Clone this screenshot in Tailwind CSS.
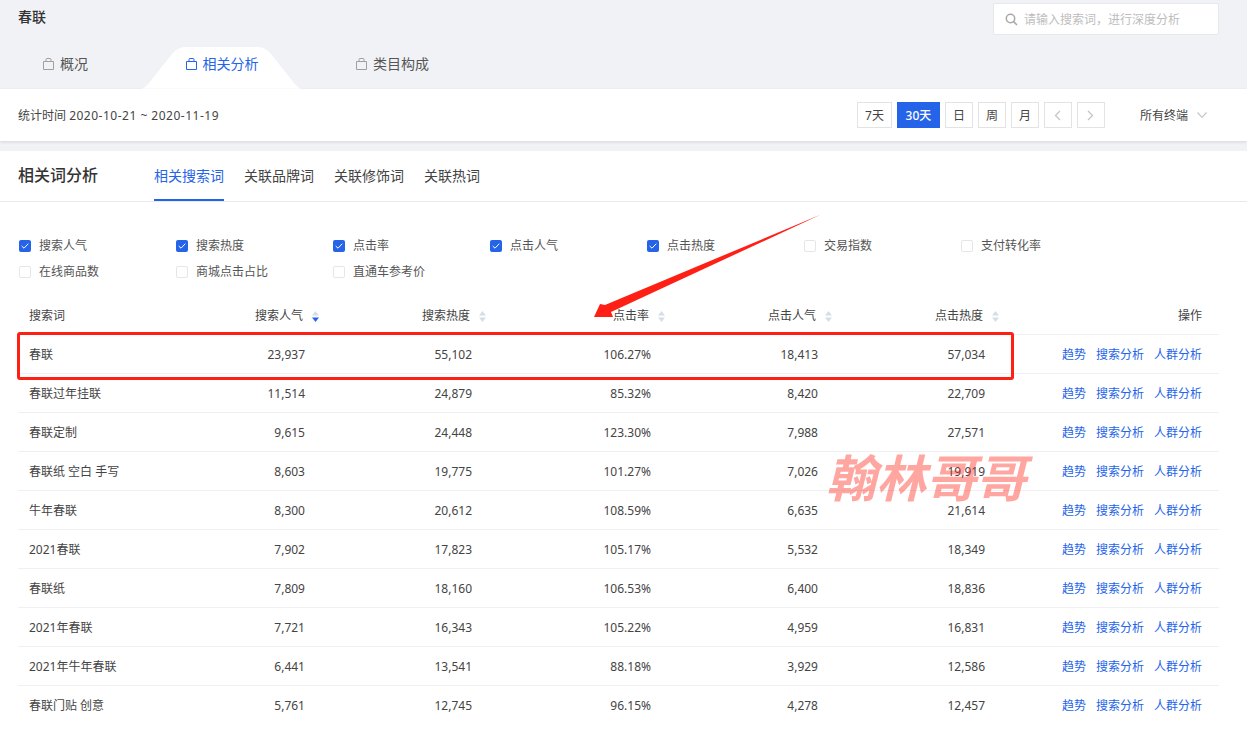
<!DOCTYPE html>
<html lang="zh-CN">
<head>
  <meta charset="UTF-8" />
  <title>春联 - 相关分析</title>
  <script src="https://cdn.jsdelivr.net/npm/@tailwindcss/browser@4"></script>
</head>
<body class="bg-white text-[12px] text-[#444] overflow-hidden font-['Noto_Sans','Noto_Sans_CJK_SC',sans-serif]">
<div class="relative w-[1247px] h-[735px] overflow-hidden">
  <!-- Top header -->
  <header class="bg-[#f1f2f6] h-[89px]">
    <div class="h-[47px] flex justify-between pl-[18px] pr-[28px] pt-[3px]">
      <h1 class="text-[14px] font-medium text-[#333] leading-[28px]">春联</h1>
      <div class="w-[226px] h-[32px] bg-white border border-[#e6e8ec] rounded-[2px] flex items-center pl-[11px] gap-[6px] text-[#bdbdbd]">
        <svg class="w-[13px] h-[13px]" viewBox="0 0 13 13" fill="none" stroke="#a8a8a8" stroke-width="1.5"><circle cx="5.5" cy="5.5" r="4.2"/><path d="M8.6 8.6 12 12"/></svg>
        <span class="pt-px">请输入搜索词，进行深度分析</span>
      </div>
    </div>
    <nav class="h-[42px] flex items-start gap-[97.5px] pl-[43px] pt-[6px] text-[14px] text-[#555]">
      <a class="flex items-center gap-[6px]">
        <svg class="w-[11px] h-[12px]" viewBox="0 0 11 12" fill="none" stroke="#a0a0a0"><path d="M.5 3.500h10v8H.5zM3 3.500V1.500q0-1 1-1h3q1 0 1 1v2"/></svg>
        概况
      </a>
      <a class="relative flex items-center gap-[6px] text-[#2564e8]">
        <svg class="absolute left-[-44.500px] top-[-6px] w-[161px] h-[42px]" viewBox="0 0 161 42" fill="#fff"><path d="M0 42 Q4 41 8 36 L31 7 Q37 0 44 0 H117 Q124 0 130 7 L153 36 Q157 41 161 42Z"/></svg>
        <svg class="relative w-[11px] h-[12px]" viewBox="0 0 11 12" fill="none" stroke="#2564e8"><path d="M.5 3.500h10v8H.5zM3 3.500V1.500q0-1 1-1h3q1 0 1 1v2"/></svg>
        <span class="relative">相关分析</span>
      </a>
      <a class="flex items-center gap-[6px]">
        <svg class="w-[11px] h-[12px]" viewBox="0 0 11 12" fill="none" stroke="#a0a0a0"><path d="M.5 3.500h10v8H.5zM3 3.500V1.500q0-1 1-1h3q1 0 1 1v2"/></svg>
        类目构成
      </a>
    </nav>
  </header>

  <!-- Date bar -->
  <div class="h-[52px] bg-white flex items-center justify-between pl-[18px] pr-[40px] shadow-[0_1px_3px_rgba(0,0,0,0.12)] relative">
    <span class="pt-[2px]">统计时间 <span class="tracking-[0.5px]">2020-10-21 ~ 2020-11-19</span></span>
    <div class="flex items-center gap-[5px] [&_button]:pt-px">
      <button class="w-[35px] h-[26px] border border-[#e3e3e3] text-[#444]">7天</button>
      <button class="w-[43px] h-[26px] bg-[#2564e8] text-white font-medium">30天</button>
      <button class="w-[28px] h-[26px] border border-[#e3e3e3] text-[#444]">日</button>
      <button class="w-[28px] h-[26px] border border-[#e3e3e3] text-[#444]">周</button>
      <button class="w-[28px] h-[26px] border border-[#e3e3e3] text-[#444]">月</button>
      <button class="w-[28px] h-[26px] border border-[#e3e3e3] flex items-center justify-center">
        <svg class="w-[7px] h-[11px]" viewBox="0 0 7 11" fill="none" stroke="#c4c4c4" stroke-width="1.3"><path d="M6 1 1.5 5.5 6 10"/></svg>
      </button>
      <button class="w-[28px] h-[26px] border border-[#e3e3e3] flex items-center justify-center">
        <svg class="w-[7px] h-[11px]" viewBox="0 0 7 11" fill="none" stroke="#c4c4c4" stroke-width="1.3"><path d="M1 1l4.500 4.500L1 10"/></svg>
      </button>
      <span class="ml-[30px] pt-[2px]">所有终端</span>
      <svg class="ml-[4px] w-[10px] h-[6px]" viewBox="0 0 10 6" fill="none" stroke="#c4c4c4" stroke-width="1.100"><path d="M.5.5 5 5.300 9.500.5"/></svg>
    </div>
  </div>

  <div class="h-[10px] bg-[#f1f2f6]"></div>

  <!-- Analysis section -->
  <section class="bg-white">
    <div class="h-[51px] flex border-b border-[#e8eaee] pl-[18px]">
      <h2 class="w-[136px] text-[16px] font-medium text-[#333] leading-[49px]">相关词分析</h2>
      <div class="flex gap-[20px] text-[14px] text-[#444] leading-[49px]">
        <a class="h-[50px] border-b-2 border-[#2564e8] text-[#2564e8]">相关搜索词</a>
        <a>关联品牌词</a>
        <a>关联修饰词</a>
        <a>关联热词</a>
      </div>
    </div>

    <div class="grid grid-cols-[repeat(7,157px)] auto-rows-[26px] pl-[19px] pt-[31px] h-[93px] text-[#555]">
      <label class="flex items-center gap-[8px] h-[26px]"><span class="w-[12px] h-[12px] rounded-[2px] bg-[#2564e8] flex items-center justify-center"><svg class="w-[8px] h-[6px]" viewBox="0 0 8 6" fill="none" stroke="#fff"><path d="M.7 3 3 5.200 7.300.7"/></svg></span>搜索人气</label>
      <label class="flex items-center gap-[8px] h-[26px]"><span class="w-[12px] h-[12px] rounded-[2px] bg-[#2564e8] flex items-center justify-center"><svg class="w-[8px] h-[6px]" viewBox="0 0 8 6" fill="none" stroke="#fff"><path d="M.7 3 3 5.200 7.300.7"/></svg></span>搜索热度</label>
      <label class="flex items-center gap-[8px] h-[26px]"><span class="w-[12px] h-[12px] rounded-[2px] bg-[#2564e8] flex items-center justify-center"><svg class="w-[8px] h-[6px]" viewBox="0 0 8 6" fill="none" stroke="#fff"><path d="M.7 3 3 5.200 7.300.7"/></svg></span>点击率</label>
      <label class="flex items-center gap-[8px] h-[26px]"><span class="w-[12px] h-[12px] rounded-[2px] bg-[#2564e8] flex items-center justify-center"><svg class="w-[8px] h-[6px]" viewBox="0 0 8 6" fill="none" stroke="#fff"><path d="M.7 3 3 5.200 7.300.7"/></svg></span>点击人气</label>
      <label class="flex items-center gap-[8px] h-[26px]"><span class="w-[12px] h-[12px] rounded-[2px] bg-[#2564e8] flex items-center justify-center"><svg class="w-[8px] h-[6px]" viewBox="0 0 8 6" fill="none" stroke="#fff"><path d="M.7 3 3 5.200 7.300.7"/></svg></span>点击热度</label>
      <label class="flex items-center gap-[8px] h-[26px]"><span class="w-[12px] h-[12px] rounded-[2px] border border-[#e6e6e6]"></span>交易指数</label>
      <label class="flex items-center gap-[8px] h-[26px]"><span class="w-[12px] h-[12px] rounded-[2px] border border-[#e6e6e6]"></span>支付转化率</label>
      <label class="flex items-center gap-[8px] h-[26px]"><span class="w-[12px] h-[12px] rounded-[2px] border border-[#e6e6e6]"></span>在线商品数</label>
      <label class="flex items-center gap-[8px] h-[26px]"><span class="w-[12px] h-[12px] rounded-[2px] border border-[#e6e6e6]"></span>商城点击占比</label>
      <label class="flex items-center gap-[8px] h-[26px]"><span class="w-[12px] h-[12px] rounded-[2px] border border-[#e6e6e6]"></span>直通车参考价</label>
    </div>

    <!-- Table -->
    <table class="ml-[18px] w-[1201px] table-fixed text-right [&_th]:font-normal [&_th]:h-[39px] [&_th]:pt-[4px] [&_th]:border-b [&_th]:border-[#eef0f3] [&_td]:h-[39px] [&_td]:pt-[2px] [&_td]:border-b [&_td]:border-[#eef0f3] [&_td]:pr-[15px] [&_td:first-child]:pl-[11px] [&_td:first-child]:pr-0 [&_td:first-child]:text-left [&_td:last-child]:pr-[17px] [&_tbody_tr:last-child_td]:border-b-0">
      <colgroup>
        <col class="w-[137px]" /><col class="w-[165px]" /><col class="w-[167px]" /><col class="w-[179px]" /><col class="w-[167px]" /><col class="w-[167px]" /><col class="w-[219px]" />
      </colgroup>
      <thead>
        <tr>
          <th class="text-left pl-[11px]">搜索词</th>
          <th class="pr-px"><span class="inline-flex items-center gap-[9px]">搜索人气<svg class="w-[7px] h-[11px]" viewBox="0 0 7 11"><path fill="#d5dde8" d="M3.500 0 7 4.500H0z"/><path fill="#2564e8" d="M0 6.500h7L3.500 11z"/></svg></span></th>
          <th class="pr-px"><span class="inline-flex items-center gap-[9px]">搜索热度<svg class="w-[7px] h-[11px]" viewBox="0 0 7 11" fill="#d5dde8"><path d="M3.500 0 7 4.500H0zM0 6.500h7L3.500 11z"/></svg></span></th>
          <th class="pr-px"><span class="inline-flex items-center gap-[9px]">点击率<svg class="w-[7px] h-[11px]" viewBox="0 0 7 11" fill="#d5dde8"><path d="M3.500 0 7 4.500H0zM0 6.500h7L3.500 11z"/></svg></span></th>
          <th class="pr-px"><span class="inline-flex items-center gap-[9px]">点击人气<svg class="w-[7px] h-[11px]" viewBox="0 0 7 11" fill="#d5dde8"><path d="M3.500 0 7 4.500H0zM0 6.500h7L3.500 11z"/></svg></span></th>
          <th class="pr-px"><span class="inline-flex items-center gap-[9px]">点击热度<svg class="w-[7px] h-[11px]" viewBox="0 0 7 11" fill="#d5dde8"><path d="M3.500 0 7 4.500H0zM0 6.500h7L3.500 11z"/></svg></span></th>
          <th class="pr-[17px]">操作</th>
        </tr>
      </thead>
      <tbody>
        <tr><td>春联</td><td>23,937</td><td>55,102</td><td>106.27%</td><td>18,413</td><td>57,034</td><td><div class="flex justify-end gap-[10px] text-[#2564e8]"><a>趋势</a><a>搜索分析</a><a>人群分析</a></div></td></tr>
        <tr><td>春联过年挂联</td><td>11,514</td><td>24,879</td><td>85.32%</td><td>8,420</td><td>22,709</td><td><div class="flex justify-end gap-[10px] text-[#2564e8]"><a>趋势</a><a>搜索分析</a><a>人群分析</a></div></td></tr>
        <tr><td>春联定制</td><td>9,615</td><td>24,448</td><td>123.30%</td><td>7,988</td><td>27,571</td><td><div class="flex justify-end gap-[10px] text-[#2564e8]"><a>趋势</a><a>搜索分析</a><a>人群分析</a></div></td></tr>
        <tr><td>春联纸 空白 手写</td><td>8,603</td><td>19,775</td><td>101.27%</td><td>7,026</td><td>19,919</td><td><div class="flex justify-end gap-[10px] text-[#2564e8]"><a>趋势</a><a>搜索分析</a><a>人群分析</a></div></td></tr>
        <tr><td>牛年春联</td><td>8,300</td><td>20,612</td><td>108.59%</td><td>6,635</td><td>21,614</td><td><div class="flex justify-end gap-[10px] text-[#2564e8]"><a>趋势</a><a>搜索分析</a><a>人群分析</a></div></td></tr>
        <tr><td>2021春联</td><td>7,902</td><td>17,823</td><td>105.17%</td><td>5,532</td><td>18,349</td><td><div class="flex justify-end gap-[10px] text-[#2564e8]"><a>趋势</a><a>搜索分析</a><a>人群分析</a></div></td></tr>
        <tr><td>春联纸</td><td>7,809</td><td>18,160</td><td>106.53%</td><td>6,400</td><td>18,836</td><td><div class="flex justify-end gap-[10px] text-[#2564e8]"><a>趋势</a><a>搜索分析</a><a>人群分析</a></div></td></tr>
        <tr><td>2021年春联</td><td>7,721</td><td>16,343</td><td>105.22%</td><td>4,959</td><td>16,831</td><td><div class="flex justify-end gap-[10px] text-[#2564e8]"><a>趋势</a><a>搜索分析</a><a>人群分析</a></div></td></tr>
        <tr><td>2021年牛年春联</td><td>6,441</td><td>13,541</td><td>88.18%</td><td>3,929</td><td>12,586</td><td><div class="flex justify-end gap-[10px] text-[#2564e8]"><a>趋势</a><a>搜索分析</a><a>人群分析</a></div></td></tr>
        <tr><td>春联门贴 创意</td><td>5,761</td><td>12,745</td><td>96.15%</td><td>4,278</td><td>12,457</td><td><div class="flex justify-end gap-[10px] text-[#2564e8]"><a>趋势</a><a>搜索分析</a><a>人群分析</a></div></td></tr>
      </tbody>
    </table>
  </section>

  <!-- Annotations drawn over the screenshot -->
  <div class="absolute left-[17px] top-[332px] w-[997px] h-[48px] border-[3px] border-[#ff2015] rounded-[3px]"></div>
  <svg class="absolute left-0 top-0 w-[1247px] h-[735px] pointer-events-none" viewBox="0 0 1247 735"><polygon fill="#ff2015" points="821,214.500 605,305 600,304 594,317 613,317 611,312"/></svg>
  <div class="absolute left-[826px] top-[444px] text-[50px] leading-[68px] font-bold italic text-[#ff2015]/40 whitespace-nowrap">翰林哥哥</div>
</div>
</body>
</html>
